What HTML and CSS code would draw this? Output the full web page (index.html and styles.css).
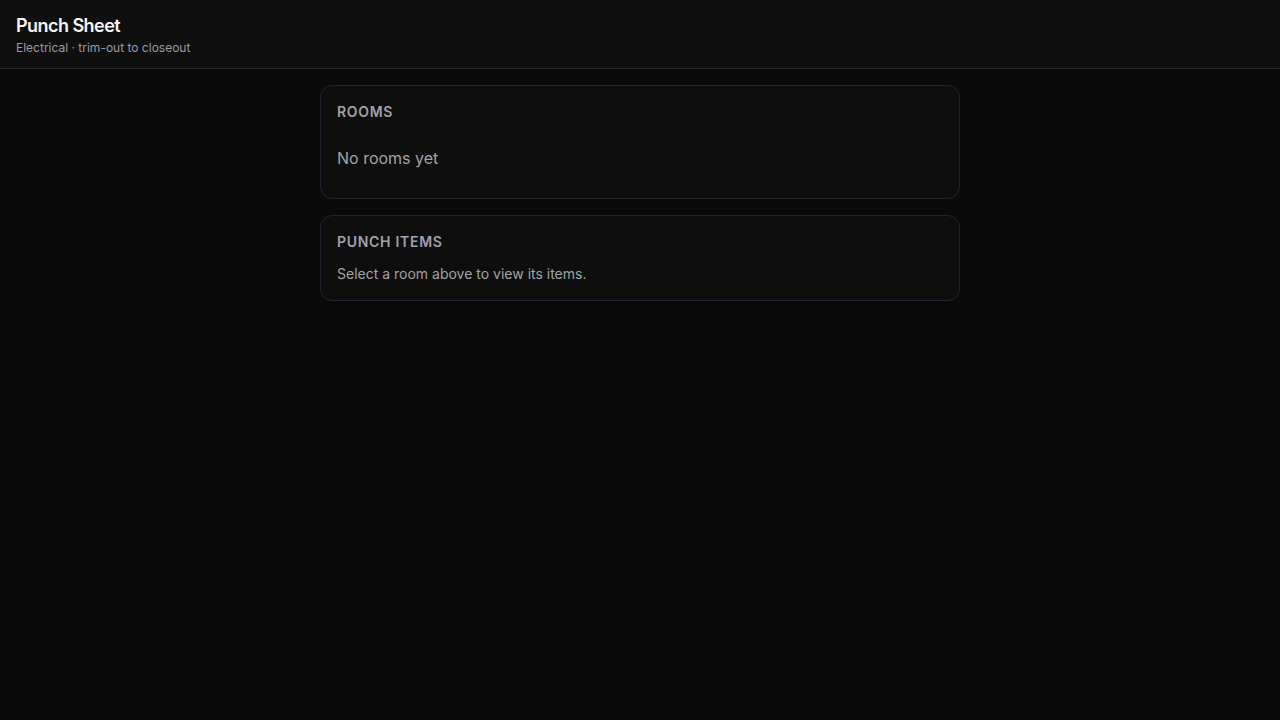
FILE: index.html
```html
<!DOCTYPE html>
<html lang="en">
<head>
<meta charset="utf-8">
<title>Punch Sheet</title>
<link rel="stylesheet" href="styles.css">
</head>
<body>
<header class="topbar">
  <h1 class="title">Punch Sheet</h1>
  <p class="subtitle">Electrical · trim-out to closeout</p>
</header>
<main class="content">
  <section class="card">
    <h2 class="card-label">Rooms</h2>
    <p class="empty">No rooms yet</p>
  </section>
  <section class="card">
    <h2 class="card-label">Punch Items</h2>
    <p class="hint">Select a room above to view its items.</p>
  </section>
</main>
</body>
</html>
```
FILE: styles.css
```css
* { box-sizing: border-box; }
html, body { margin: 0; padding: 0; }
body {
  background: #0a0a0a;
  color: #e5e5e5;
  font-family: Inter, "Noto Sans", sans-serif;
  min-height: 720px;
}
.topbar {
  background: #0f0f10;
  border-bottom: 1px solid #22262e;
  padding: 14px 16px 12px;
}
.title {
  margin: 0;
  font-size: 18px;
  line-height: 24px;
  font-weight: 600;
  color: #f5f5f5;
  letter-spacing: -0.03em;
}
.subtitle {
  margin: 2px 0 0;
  font-size: 12px;
  line-height: 16px;
  color: #9a9aa2;
}
.content {
  width: 640px;
  margin: 0 auto;
  padding-top: 16px;
  display: flex;
  flex-direction: column;
  gap: 16px;
}
.card {
  background: #0e0e0f;
  border: 1px solid #1f2530;
  border-radius: 12px;
  padding: 16px;
}
.card-label {
  margin: 0 0 12px;
  font-size: 14px;
  line-height: 20px;
  font-weight: 600;
  letter-spacing: 0.05em;
  text-transform: uppercase;
  color: #a1a1aa;
}
.empty {
  margin: 0;
  padding: 12px 0;
  font-size: 16px;
  line-height: 24px;
  color: #a3a3a3;
}
.hint {
  margin: 0;
  font-size: 14px;
  line-height: 20px;
  color: #a3a3a3;
}
```
